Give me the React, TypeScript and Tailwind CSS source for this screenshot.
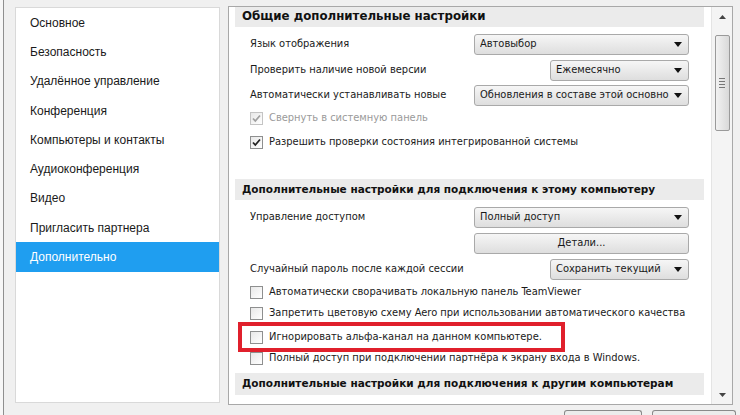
import React from 'react';

const navItems = [
  'Основное',
  'Безопасность',
  'Удалённое управление',
  'Конференция',
  'Компьютеры и контакты',
  'Аудиоконференция',
  'Видео',
  'Пригласить партнера',
  'Дополнительно',
];

const body = { fontFamily: '"DejaVu Sans Condensed", "DejaVu Sans", sans-serif' };
const bold = { fontFamily: '"DejaVu Sans", sans-serif' };

const Arrow = () => (
  <svg width="8" height="5" viewBox="0 0 8 5" className="shrink-0">
    <path d="M0 0h8L4 5z" fill="#111" />
  </svg>
);

const Select = ({ value, className }: { value: string; className: string }) => (
  <div
    className={`h-[21px] flex items-center justify-between pl-[5px] pr-[6px] rounded-[3px] border border-[#a9a9a9] bg-gradient-to-b from-[#f6f6f6] to-[#dedede] text-[11px] text-[#1a1a1a] ${className}`}
  >
    <span className="whitespace-nowrap overflow-hidden">{value}</span>
    <Arrow />
  </div>
);

const Checkbox = ({ checked, disabled }: { checked?: boolean; disabled?: boolean }) => (
  <div
    className={`w-[13px] h-[13px] shrink-0 border flex items-center justify-center bg-gradient-to-br from-[#e8e8e8] to-white ${
      disabled ? 'border-[#c4c4c4]' : 'border-[#8e8f8f]'
    }`}
  >
    {checked && (
      <svg width="9" height="9" viewBox="0 0 9 9">
        <path
          d="M1 4.5l2.3 2.5L8 1.5"
          fill="none"
          stroke={disabled ? '#a0a0a0' : '#222'}
          strokeWidth="1.8"
        />
      </svg>
    )}
  </div>
);

const CheckRow = ({ label, checked, disabled, className = '' }: { label: string; checked?: boolean; disabled?: boolean; className?: string }) => (
  <div className={`flex items-center gap-[6px] ${className}`}>
    <Checkbox checked={checked} disabled={disabled} />
    <span className={`text-[11px] whitespace-nowrap ${disabled ? 'text-[#9a9a9a]' : 'text-[#1a1a1a]'}`}>{label}</span>
  </div>
);

const Header = ({ title, className = '', textClass = 'text-[10.5px]' }: { title: string; className?: string; textClass?: string }) => (
  <div className={`ml-[6px] mr-[7px] bg-[#ebebeb] flex items-center pl-[7px] ${className}`}>
    <span style={bold} className={`${textClass} font-bold text-[#111] whitespace-nowrap`}>
      {title}
    </span>
  </div>
);

const Label = ({ text }: { text: string }) => (
  <span className="text-[11px] text-[#1a1a1a] whitespace-nowrap">{text}</span>
);

export default function App() {
  return (
    <div style={body} className="w-[740px] h-[415px] bg-[#f0f0f0] overflow-hidden relative flex">
      <div className="w-[4px] h-full bg-[#f7f7f7] border-r border-[#8f8f8f]" />
      <div className="flex flex-col flex-1">
        <div className="flex pt-[6px] pl-[11px] gap-[8px]">
          {/* left nav */}
          <div className="w-[205px] h-[396px] mt-[1px] bg-white border border-[#d9d9d9]">
            {navItems.map((item) => (
              <div
                key={item}
                style={{ fontFamily: '"Liberation Sans", Arial, sans-serif' }}
                className={`h-[29.3px] flex items-center pl-[14px] text-[12px] ${
                  item === 'Дополнительно' ? 'bg-[#1f9ef0] text-white' : 'text-[#1a1a1a]'
                }`}
              >
                {item}
              </div>
            ))}
          </div>

          {/* right panel */}
          <div className="w-[505px] h-[399px] border border-[#a8a8a8] bg-white flex">
            <div className="w-[483px] border-r border-[#e4e4e4] flex flex-col">
              <Header title="Общие дополнительные настройки" className="h-[20px]" textClass="text-[11.8px]" />
              <div className="flex items-center justify-between mt-[6px] pl-[21px] pr-[22px] h-[22px]">
                <Label text="Язык отображения" />
                <Select value="Автовыбор" className="w-[215px]" />
              </div>
              <div className="flex items-center justify-between mt-[4px] pl-[21px] pr-[22px] h-[22px]">
                <Label text="Проверить наличие новой версии" />
                <Select value="Ежемесячно" className="w-[139px]" />
              </div>
              <div className="flex items-center justify-between mt-[3px] pl-[21px] pr-[22px] h-[22px]">
                <Label text="Автоматически устанавливать новые" />
                <Select value="Обновления в составе этой основно" className="w-[215px]" />
              </div>
              <CheckRow label="Свернуть в системную панель" checked disabled className="h-[22px] mt-[1px] pl-[21px]" />
              <CheckRow label="Разрешить проверки состояния интегрированной системы" checked className="h-[22px] mt-[2px] pl-[21px]" />

              <Header title="Дополнительные настройки для подключения к этому компьютеру" className="mt-[26px] h-[21px]" />
              <div className="flex items-center justify-between mt-[6px] pl-[21px] pr-[22px] h-[22px]">
                <Label text="Управление доступом" />
                <Select value="Полный доступ" className="w-[215px]" />
              </div>
              <div className="flex justify-end mt-[5px] pr-[22px] h-[22px]">
                <div className="w-[215px] h-[21px] rounded-[3px] border border-[#a9a9a9] bg-gradient-to-b from-[#f6f6f6] to-[#dedede] flex items-center justify-center text-[11px] text-[#1a1a1a]">
                  Детали...
                </div>
              </div>
              <div className="flex items-center justify-between mt-[3px] pl-[21px] pr-[22px] h-[22px]">
                <Label text="Случайный пароль после каждой сессии" />
                <Select value="Сохранить текущий" className="w-[139px]" />
              </div>
              <CheckRow label="Автоматически сворачивать локальную панель TeamViewer" className="h-[22px] mt-[1px] pl-[21px]" />
              <CheckRow label="Запретить цветовую схему Aero при использовании автоматического качества" className="h-[20px] pl-[21px]" />
              <div className="ml-[9px] -mt-[1px] w-[327px] h-[30px] border-[4px] border-[#e0202c] flex items-center">
                <CheckRow label="Игнорировать альфа-канал на данном компьютере." className="pl-[8px]" />
              </div>
              <CheckRow label="Полный доступ при подключении партнёра к экрану входа в Windows." className="h-[13px] mt-[0px] pl-[21px]" />
              <Header title="Дополнительные настройки для подключения к другим компьютерам" className="mt-[8px] h-[22px]" />
            </div>

            {/* scrollbar */}
            <div className="w-[20px] bg-[#f4f4f4] flex flex-col items-center">
              <div className="h-[20px] flex items-center justify-center">
                <svg width="7" height="4" viewBox="0 0 7 4">
                  <path d="M0 4h7L3.5 0z" fill="#444" />
                </svg>
              </div>
              <div className="w-[15px] h-[96px] mt-[8px] rounded-[2px] border border-[#9a9a9a] bg-gradient-to-r from-[#f2f2f2] to-[#d9d9d9] flex flex-col items-center justify-center gap-[2px]">
                <div className="w-[6px] h-px bg-[#777]" />
                <div className="w-[6px] h-px bg-[#777]" />
                <div className="w-[6px] h-px bg-[#777]" />
                <div className="w-[6px] h-px bg-[#777]" />
              </div>
              <div className="flex-1" />
              <div className="h-[18px] flex items-center justify-center">
                <svg width="7" height="4" viewBox="0 0 7 4">
                  <path d="M0 0h7L3.5 4z" fill="#444" />
                </svg>
              </div>
            </div>
          </div>
        </div>
        {/* bottom buttons (tops visible) */}
        <div className="flex justify-end gap-[10px] pr-[4px] mt-[5px]">
          <div className="w-[78px] h-[12px] rounded-t-[3px] border border-b-0 border-[#8a8a8a] bg-[#ececec]" />
          <div className="w-[84px] h-[12px] rounded-t-[3px] border border-b-0 border-[#8a8a8a] bg-[#ececec]" />
        </div>
      </div>
    </div>
  );
}
